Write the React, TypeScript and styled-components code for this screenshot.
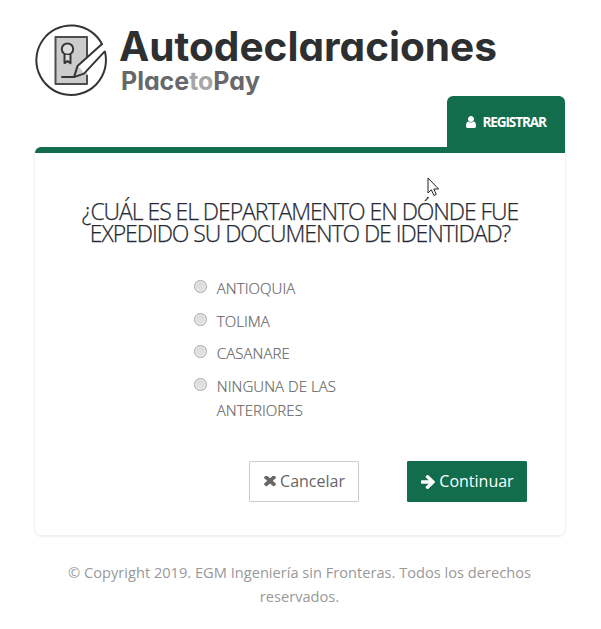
import React from "react";
import styled, { createGlobalStyle } from "styled-components";

const GREEN = "#116d4b";

const GlobalStyle = createGlobalStyle`
  * { box-sizing: border-box; }
  body {
    margin: 0;
    background: #fff;
    color: #777;
    font-family: "Open Sans", "Noto Sans", sans-serif;
    font-size: 15px;
    line-height: 24px;
  }
`;

const Page = styled.main`
  display: flex;
  flex-direction: column;
  width: 601px;
  height: 629px;
  padding: 20px 36px 0 35px;
  position: relative;
  overflow: hidden;
`;

const Brand = styled.header`
  height: 76px;
`;

const Logo = styled.svg`
  display: block;
  width: 480px;
  height: 80px;
  overflow: visible;
`;

const Wordmark = styled.text`
  font-family: Inter, sans-serif;
  font-size: 40.5px;
  font-weight: 700;
  font-feature-settings: "cv11";
  fill: #2d2f31;
`;

const Submark = styled(Wordmark)`
  font-size: 25px;
  fill: #66686b;
`;

const TabBar = styled.nav`
  display: flex;
  justify-content: flex-end;
  height: 51px;
`;

const Tab = styled.a`
  display: flex;
  align-items: center;
  gap: 7px;
  width: 118px;
  height: 52px;
  padding-left: 18.5px;
  border-radius: 6px 6px 0 0;
  background: ${GREEN};
  color: #fff;
  font-size: 13.6px;
  font-weight: 700;
  letter-spacing: -1.15px;
  white-space: nowrap;
`;

const Card = styled.section`
  height: 388px;
  padding: 47px 38px 0;
  border-top: 6px solid ${GREEN};
  border-radius: 6px 0 6px 6px;
  box-shadow: 0 1px 2px 1px rgba(0, 0, 0, 0.06);
`;

const Title = styled.h1`
  margin: 0;
  color: #272a33;
  font-size: 23px;
  font-weight: 300;
  -webkit-text-stroke: 0.25px #272a33;
  line-height: 22px;
  letter-spacing: -1.06px;
  text-align: center;
  white-space: nowrap;
`;

const Options = styled.div`
  display: flex;
  flex-direction: column;
  gap: 8.6px;
  margin: 32px 0 0 121px;
`;

const Option = styled.label`
  display: flex;
  gap: 9.8px;
  font-weight: 300;
  font-size: 15px;
  letter-spacing: 0.06px;
  -webkit-text-stroke: 0.2px #666;
  color: #666;
  white-space: nowrap;
`;

const Radio = styled.input.attrs({ type: "radio", name: "departamento" })`
  appearance: none;
  flex: none;
  width: 13px;
  height: 13px;
  margin: 4px 0 0;
  border: 1px solid #a5a5a5;
  border-radius: 50%;
  background: linear-gradient(#d9dad9, #e3e4e3);
  box-shadow: inset 0 0 0 1px #ececec;
`;

const Actions = styled.div`
  display: flex;
  justify-content: flex-end;
  gap: 48px;
  margin-top: 39px;
`;

const Button = styled.button<{ $primary?: boolean }>`
  display: flex;
  align-items: center;
  justify-content: center;
  gap: 4px;
  width: ${(p) => (p.$primary ? 120 : 110)}px;
  height: 41px;
  padding: 0 0 1px 1px;
  border: 1px solid ${(p) => (p.$primary ? GREEN : "#ccc")};
  border-radius: 1px;
  background: ${(p) => (p.$primary ? GREEN : "#fff")};
  color: ${(p) => (p.$primary ? "#fff" : "#666")};
  font: 400 16px "Open Sans", sans-serif;
  svg { margin-top: 2px; }
`;

const Footer = styled.footer`
  padding: 25px 1px 0 0;
  color: #999;
  font-size: 14.63px;
  text-align: center;
`;

const Cursor = styled.svg`
  position: absolute;
  left: 427px;
  top: 177px;
  width: 13px;
  height: 20px;
`;

const UserIcon = () => (
  <svg width="10" height="12" viewBox="0 128 1280 1536" preserveAspectRatio="none" fill="currentColor">
    <path d="M1280 1399q0 109-62.500 187t-150.500 78h-854q-88 0-150.500-78t-62.500-187q0-85 8.500-160.500t31.500-152 58.500-131 94-89 134.500-34.500q131 128 313 128t313-128q76 0 134.500 34.500t94 89 58.500 131 31.500 152 8.500 160.500zm-256-887q0 159-112.500 271.500t-271.500 112.500-271.500-112.500-112.500-271.500 112.500-271.500 271.500-112.500 271.500 112.500 112.500 271.500z" />
  </svg>
);

const TimesIcon = () => (
  <svg width="12" height="11" viewBox="110 434 1188 1188" preserveAspectRatio="none" fill="currentColor">
    <path d="M1298 1322q0 40-28 68l-136 136q-28 28-68 28t-68-28l-294-294-294 294q-28 28-68 28t-68-28l-136-136q-28-28-28-68t28-68l294-294-294-294q-28-28-28-68t28-68l136-136q28-28 68-28t68 28l294 294 294-294q28-28 68-28t68 28l136 136q28 28 28 68t-28 68l-294 294 294 294q28 28 28 68z" />
  </svg>
);

const ArrowIcon = () => (
  <svg width="14" height="14" viewBox="0 181 1472 1558" preserveAspectRatio="none" fill="currentColor">
    <path d="M1472 960q0 54-37 91l-651 651q-39 37-91 37-51 0-90-37l-75-75q-38-38-38-91t38-91l293-293H117q-52 0-84.500-37.500T0 1024V896q0-53 32.500-90.500T117 768h704L528 474q-38-36-38-90t38-90l75-75q38-38 90-38 53 0 91 38l651 651q37 35 37 90z" />
  </svg>
);

const options = [
  <>ANTIOQUIA</>,
  <>TOLIMA</>,
  <>CASANARE</>,
  <>NINGUNA DE LAS<br />ANTERIORES</>,
];

export default function App() {
  return (
    <>
      <GlobalStyle />
      <Page>
        <Brand>
          <Logo viewBox="0 0 480 80">
            <g transform="translate(0 0.6)" fill="none" stroke="#333537" strokeWidth="2" strokeLinejoin="round" strokeLinecap="round">
              <path d="M67 23.500A34.800 34.800 0 1 0 70 31.500" />
              <path d="M20.500 16.500H52V63.500H20.500Z" fill="#ccc" stroke="none" />
              <path d="M52 36V16.500H20.500V63.500H52V55" stroke="#4b4d50" />
              <path d="M67 23.500L42.500 45.500L39 56.500L49 53L69.500 31" fill="#fff" stroke="none" />
              <path d="M42.500 45.500Q46.500 48 49 53L39 56.500Z" fill="#ccc" stroke="none" />
              <path d="M67 23.500L42.500 45.500L39 56.500L49 53L69.500 31" />
              <path d="M27 56.500H39" />
              <circle cx="32.500" cy="28.500" r="5.700" fill="#ddd" />
              <path d="M29.500 34.500V42.500L32.500 40.500L35.500 42.500V34.500" fill="#ddd" />
            </g>
            <Wordmark x="84" y="41" textLength="378" lengthAdjust="spacingAndGlyphs">Autodeclaraciones</Wordmark>
            <Submark x="86" y="70" textLength="139" lengthAdjust="spacingAndGlyphs">
              Place<tspan fill="#a5a6a8">to</tspan>Pay
            </Submark>
          </Logo>
        </Brand>
        <TabBar>
          <Tab><UserIcon />REGISTRAR</Tab>
        </TabBar>
        <Card>
          <Title>
            ¿CUÁL ES EL DEPARTAMENTO EN DÓNDE FUE<br />
            EXPEDIDO SU DOCUMENTO DE IDENTIDAD?
          </Title>
          <Options>
            {options.map((label, i) => (
              <Option key={i}><Radio /><span>{label}</span></Option>
            ))}
          </Options>
          <Actions>
            <Button><TimesIcon />Cancelar</Button>
            <Button $primary><ArrowIcon />Continuar</Button>
          </Actions>
        </Card>
        <Footer>
          © Copyright 2019. EGM Ingeniería sin Fronteras. Todos los derechos<br />reservados.
        </Footer>
        <Cursor viewBox="0 0 13 20">
          <path d="M1 1V16L4.300 12.800L7 18.500L9.300 17.400L6.800 12H11.500Z" fill="#fff" stroke="#222" />
        </Cursor>
      </Page>
    </>
  );
}
